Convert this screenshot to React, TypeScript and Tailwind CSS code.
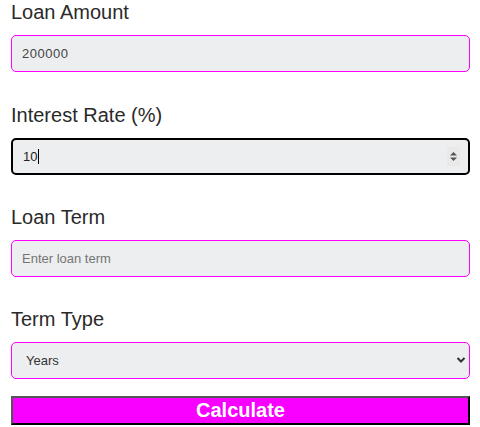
import React from "react";

const font = { fontFamily: '"Liberation Sans", Arial, sans-serif' };

function Label({ children }: { children: React.ReactNode }) {
  return (
    <label className="mb-[11px] block pt-[1px] text-[20px] leading-[23px] text-[#2a2a2a]">
      {children}
    </label>
  );
}

export default function App() {
  return (
    <div className="bg-white pl-[11px] pr-[10px]" style={font}>
      <div className="mb-[31px]">
        <Label>Loan Amount</Label>
        <input
          type="text"
          defaultValue="200000"
          className="block h-[37px] w-full rounded-[5px] border border-[#ff00ff] bg-[#eceeef] px-[10px] text-[13px] tracking-[0.5px] text-[#444] outline-none"
        />
      </div>

      <div className="mb-[30px]">
        <Label>Interest Rate (%)</Label>
        <div className="relative">
          <input
            type="text"
            defaultValue="10"
            className="block h-[37px] w-full rounded-[5px] border-2 border-black bg-[#eceeef] px-[10px] text-[13px] text-[#222] outline-none"
          />
          <span className="absolute left-[27px] top-[11px] h-[15px] w-px bg-black" />
          <span className="absolute right-[10px] top-[9px] flex h-[19px] w-[13px] items-center justify-center bg-[#e9e9e9]">
            <svg width="9" height="11" viewBox="0 0 9 11">
              <path d="M4.5 1 L8 4.5 H1 Z" fill="#555" />
              <path d="M4.5 10 L8 6.5 H1 Z" fill="#555" />
            </svg>
          </span>
        </div>
      </div>

      <div className="mb-[30px]">
        <Label>Loan Term</Label>
        <input
          type="text"
          placeholder="Enter loan term"
          className="block h-[37px] w-full rounded-[5px] border border-[#ff00ff] bg-[#eceeef] px-[10px] text-[13px] text-[#444] outline-none placeholder:text-[#757575]"
        />
      </div>

      <div className="mb-[17px]">
        <Label>Term Type</Label>
        <div className="relative">
          <select
            defaultValue="years"
            className="block h-[37px] w-full appearance-none rounded-[5px] border border-[#ff00ff] bg-[#eceeef] pl-[14px] text-[13px] text-[#333] outline-none"
          >
            <option value="years">Years</option>
            <option value="months">Months</option>
          </select>
          <svg
            className="pointer-events-none absolute right-[4px] top-[14px]"
            width="10"
            height="8"
            viewBox="0 0 10 8"
          >
            <path d="M1.5 2 L5 5.5 L8.5 2" stroke="#333" strokeWidth="2" fill="none" />
          </svg>
        </div>
      </div>

      <button
        type="button"
        className="block h-[29px] w-full border-2 border-t-[#555] border-l-[#555] border-b-black border-r-black bg-[#f700ff] text-[20px] leading-[23px] font-bold text-white"
      >
        Calculate
      </button>
    </div>
  );
}
